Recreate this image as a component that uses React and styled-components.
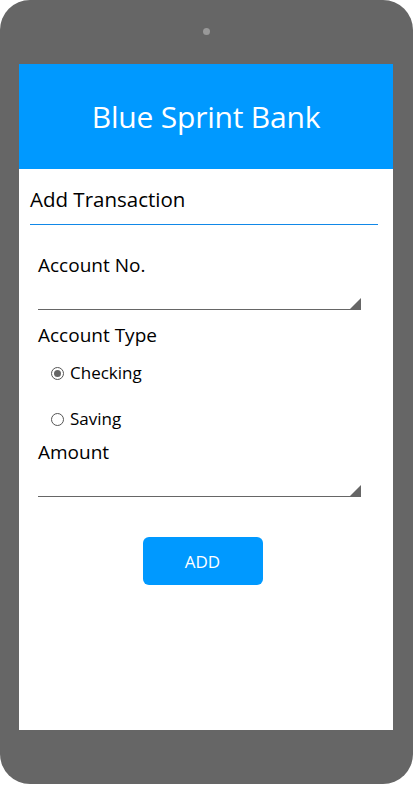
import styled, { createGlobalStyle } from "styled-components";

const GlobalStyle = createGlobalStyle`
  html, body {
    margin: 0;
    padding: 0;
    background: #fff;
  }
  body {
    font-family: "Open Sans", "Noto Sans", sans-serif;
  }
`;

const Device = styled.div`
  width: 413px;
  height: 784px;
  background: #666666;
  border-radius: 30px;
  display: flex;
  flex-direction: column;
  padding: 0 20px 0 19px;
  box-sizing: border-box;
`;

const TopBezel = styled.div`
  height: 64px;
  display: flex;
  justify-content: center;
  padding-top: 28px;
  box-sizing: border-box;
`;

const Camera = styled.span`
  width: 7px;
  height: 7px;
  border-radius: 50%;
  background: #999;
`;

const BottomBezel = styled.div`
  height: 54px;
`;

const Screen = styled.div`
  flex: 1;
  background: #fff;
  display: flex;
  flex-direction: column;
`;

const Header = styled.header`
  height: 105px;
  background: #0099ff;
  display: flex;
  align-items: center;
  justify-content: center;
`;

const Title = styled.h1`
  margin: 0;
  color: #fff;
  font-weight: 400;
  font-size: 30px;
  letter-spacing: -0.2px;
`;

const SectionTitle = styled.h2`
  margin: 16px 15px 0 11px;
  padding-bottom: 11px;
  border-bottom: 1px solid #1188e8;
  font-size: 20.5px;
  font-weight: 400;
  color: #000;
  line-height: 28px;
`;

const Form = styled.form`
  display: flex;
  flex-direction: column;
  padding: 0 32px 0 19px;
`;

const Label = styled.label`
  font-size: 19px;
  color: #000;
  line-height: 26px;
  margin-top: ${(p) => p.$top || 0}px;
`;

const InputWrap = styled.div`
  position: relative;
  height: 27px;
  border-bottom: 1px solid #666;
  margin-top: 4px;
`;

const Grip = styled.span`
  position: absolute;
  right: 0;
  bottom: 0;
  width: 0;
  height: 0;
  border-style: solid;
  border-width: 0 0 11px 11px;
  border-color: transparent transparent #666 transparent;
`;

const Radio = styled.label`
  display: flex;
  align-items: center;
  gap: 6px;
  margin: ${(p) => p.$top}px 0 0 13px;
  font-size: 17px;
  line-height: 24px;
  color: #000;
`;

const Dot = styled.span`
  width: 11px;
  height: 11px;
  border: 1px solid #555;
  border-radius: 50%;
  display: flex;
  align-items: center;
  justify-content: center;
  &::after {
    content: "";
    width: 7px;
    height: 7px;
    border-radius: 50%;
    background: ${(p) => (p.$checked ? "#666" : "transparent")};
  }
`;

const ButtonRow = styled.div`
  display: flex;
  justify-content: center;
  margin-top: 40px;
  padding-left: 6px;
`;

const AddButton = styled.button`
  width: 120px;
  height: 48px;
  border: none;
  border-radius: 6px;
  background: #0099ff;
  color: #fff;
  font-family: inherit;
  font-size: 17px;
`;

function Field({ label, top }) {
  return (
    <>
      <Label $top={top}>{label}</Label>
      <InputWrap>
        <Grip />
      </InputWrap>
    </>
  );
}

export default function App() {
  return (
    <>
      <GlobalStyle />
      <Device>
        <TopBezel>
          <Camera />
        </TopBezel>
        <Screen>
          <Header>
            <Title>Blue Sprint Bank</Title>
          </Header>
          <SectionTitle>Add Transaction</SectionTitle>
          <Form>
            <Field label="Account No." top={27} />
            <Label $top={12}>Account Type</Label>
            <Radio $top={13}>
              <Dot $checked />
              Checking
            </Radio>
            <Radio $top={22}>
              <Dot />
              Saving
            </Radio>
            <Field label="Amount" top={8} />
            <ButtonRow>
              <AddButton type="button">ADD</AddButton>
            </ButtonRow>
          </Form>
        </Screen>
        <BottomBezel />
      </Device>
    </>
  );
}
